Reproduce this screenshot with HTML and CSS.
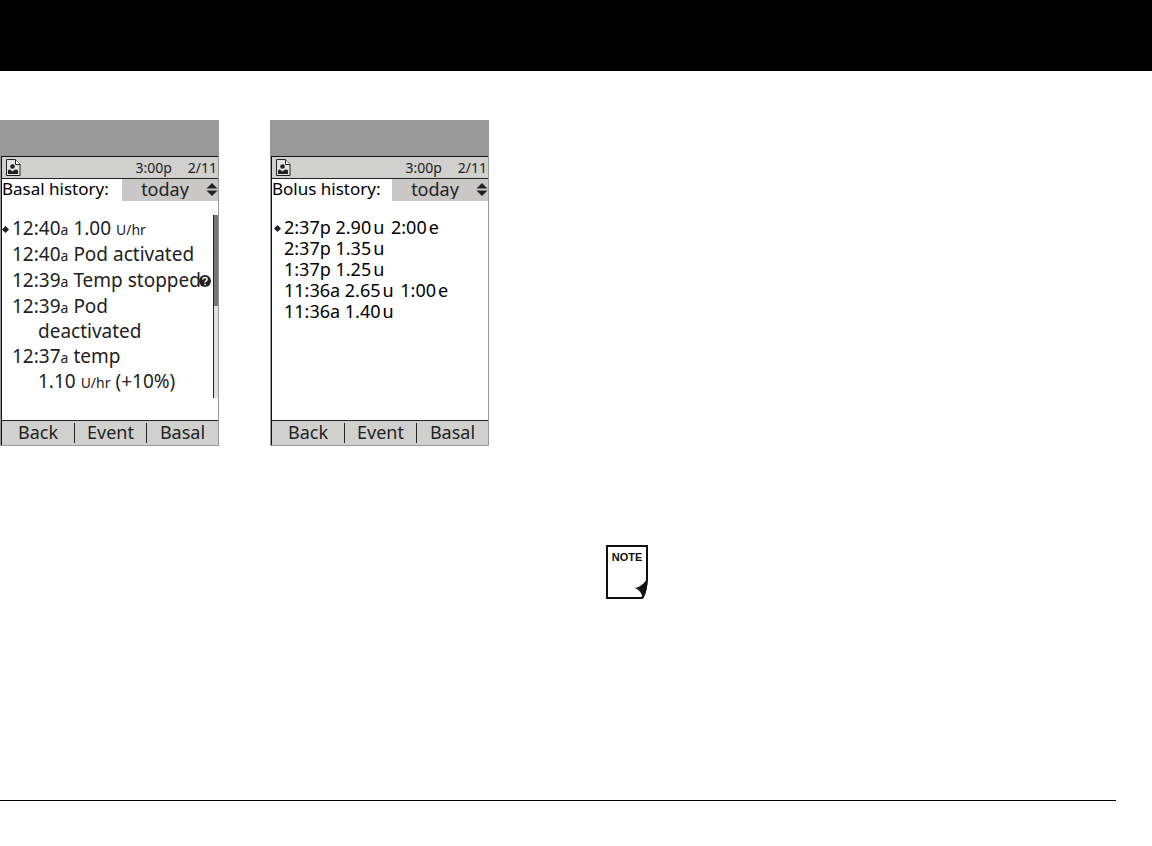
FILE: index.html
```
<!DOCTYPE html>
<html lang="en">
<head>
<meta charset="utf-8">
<meta name="viewport" content="width=device-width, initial-scale=1">
<title>Basal and bolus history</title>
<link rel="stylesheet" href="styles.css">
</head>
<body>
<svg class="defs" aria-hidden="true">
  <symbol id="doc" viewBox="0 0 15 17">
    <path d="M.5 .5H9.500L14 5.500V16.500H.5Z" fill="#e4e4e2" stroke="#222"/>
    <path d="M9.500 .5V5.500H14" fill="#fff" stroke="#222"/>
    <circle cx="6.500" cy="7.500" r="2.300" fill="#222"/>
    <path d="M2 15V11.500Q2 10.500 4 10.500L6.500 12.500L9 10.500Q12 10.500 12 11.500V15Z" fill="#222"/>
  </symbol>
  <symbol id="arrows" viewBox="0 0 12 13">
    <path d="M6 0L11.500 5.500H.5ZM.5 7.500H11.500L6 13Z" fill="#222"/>
  </symbol>
  <symbol id="diamond" viewBox="0 0 7 7">
    <path d="M3.500 0L7 3.500L3.500 7L0 3.500Z" fill="#222"/>
  </symbol>
</svg>

<header class="banner"></header>

<main class="page">
  <section class="device">
    <div class="bezel"></div>
    <div class="screen">
      <div class="status">
        <svg class="doc"><use href="#doc"/></svg>
        <span class="time">3:00p</span><span>2/11</span>
      </div>
      <div class="filter">
        <label for="basal-day">Basal history:</label>
        <div class="picker">
          <select id="basal-day"><option>today</option></select>
          <svg class="arrows"><use href="#arrows"/></svg>
        </div>
      </div>
      <div class="content">
        <ul class="log basal">
          <li><svg class="mark"><use href="#diamond"/></svg>12:40<small>a</small> 1.00 <small>U/hr</small></li>
          <li>12:40<small>a</small> Pod activated</li>
          <li>12:39<small>a</small> Temp stopped<svg class="help" viewBox="0 0 12 12"><circle cx="6" cy="6" r="6" fill="#222"/><path d="M3.800 4.500Q4 2.500 6 2.500T8.200 4.300Q8.200 5.300 7 6Q6 6.500 6 7.500M6 8.700V10.200" fill="none" stroke="#fff" stroke-width="1.500"/></svg></li>
          <li>12:39<small>a</small> Pod<div class="more">deactivated</div></li>
          <li>12:37<small>a</small> temp<div class="more">1.10 <small>U/hr</small> (+10%)</div></li>
        </ul>
        <div class="scroll"><div class="thumb"></div></div>
      </div>
      <div class="keys"><button>Back</button><button>Event</button><button>Basal</button></div>
    </div>
  </section>

  <section class="device">
    <div class="bezel"></div>
    <div class="screen">
      <div class="status">
        <svg class="doc"><use href="#doc"/></svg>
        <span class="time">3:00p</span><span>2/11</span>
      </div>
      <div class="filter">
        <label for="bolus-day">Bolus history:</label>
        <div class="picker">
          <select id="bolus-day"><option>today</option></select>
          <svg class="arrows"><use href="#arrows"/></svg>
        </div>
      </div>
      <div class="content">
        <ul class="log bolus">
          <li><svg class="mark"><use href="#diamond"/></svg>2:37p 2.90<i>u</i> 2:00<i>e</i></li>
          <li>2:37p 1.35<i>u</i></li>
          <li>1:37p 1.25<i>u</i></li>
          <li>11:36a 2.65<i>u</i> 1:00<i>e</i></li>
          <li>11:36a 1.40<i>u</i></li>
        </ul>
      </div>
      <div class="keys"><button>Back</button><button>Event</button><button>Basal</button></div>
    </div>
  </section>

  <aside class="aside">
    <div class="note">
      <svg class="sheet" viewBox="0 0 42 54"><path d="M1 1H41V34Q40 47 36 53H1Z" fill="#fff" stroke="#111" stroke-width="2"/><path d="M42 32Q41 48 37 54Q36 46 29 43Q38 41 42 32Z" fill="#111"/></svg>
      <span>NOTE</span>
    </div>
  </aside>
</main>

<footer class="rule"></footer>
</body>
</html>
```
FILE: styles.css
```
* { box-sizing: border-box; }
body {
  margin: 0;
  min-height: 100vh;
  display: flex;
  flex-direction: column;
  background: #fff;
  color: #222;
  font-family: "Noto Sans", "Open Sans", sans-serif;
  font-size: 18px;
}
svg { display: block; flex: none; }
.defs { position: absolute; width: 0; height: 0; }
.banner { height: 71px; background: #000; }
.page {
  flex: 1;
  display: flex;
  align-items: flex-start;
  gap: 51px;
  padding-top: 49px;
}
.device {
  width: 219px;
  flex: none;
  border: solid #999;
  border-width: 0 1px 1px;
}
.bezel { height: 36px; margin: 0 -1px; background: #999; }
.screen { border-left: 1px solid #111; border-top: 1px solid #111; }
.status {
  display: flex;
  align-items: center;
  gap: 16px;
  height: 22px;
  padding: 0 1px 0 4px;
  background: #d0d0ce;
  border-bottom: 1px solid #222;
  font-size: 14px;
}
.doc { width: 15px; height: 17px; }
.time { margin-left: auto; }
.filter {
  display: flex;
  justify-content: space-between;
  height: 22px;
  line-height: 20px;
  color: #000;
}
.filter label { font-size: 17px; }
.picker { position: relative; width: 96px; height: 22px; background: #c9c8c6; }
.picker select {
  appearance: none;
  display: block;
  width: 100%;
  height: 20px;
  padding: 0 10px 0 0;
  border: 0;
  background: none;
  color: #222;
  font: inherit;
  line-height: 20px;
  text-align: center;
  text-align-last: center;
}
.arrows { position: absolute; right: 0; top: 4px; width: 12px; height: 13px; pointer-events: none; }
.content { display: flex; justify-content: space-between; height: 219px; padding-top: 14px; }
.log { margin: 0; padding: 0; list-style: none; white-space: nowrap; }
.log li { position: relative; }
.log i { margin: 0 2px; font-style: normal; }
.basal { padding-left: 10px; font-size: 19px; line-height: 26px; }
.basal small { font-size: 14px; line-height: 1; }
.more { padding-left: 26px; line-height: 24px; }
.bolus { padding: 2px 0 0 12px; line-height: 21px; color: #000; }
.mark { position: absolute; left: -10px; top: 11px; width: 7px; height: 7px; }
.bolus .mark { top: 8px; }
.help { display: inline-block; width: 12px; height: 12px; margin-left: -2px; vertical-align: 0; }
.scroll { flex: none; width: 5px; height: 183px; background: #e0e0de; border-left: 1px solid #222; }
.thumb { width: 4px; height: 91px; background: #777; }
.keys {
  display: grid;
  grid-template-columns: 1fr 1fr 1fr;
  height: 25px;
  padding: 2px 0;
  background: #d0d0ce;
  border-top: 1px solid #222;
}
.keys button {
  padding: 0 0 2px;
  border: 0;
  background: none;
  color: #222;
  font: inherit;
  line-height: 18px;
}
.keys button + button { border-left: 1px solid #222; }
.aside { flex: 1; padding: 425px 0 0 66px; }
.note { position: relative; width: 42px; }
.sheet { width: 42px; height: 54px; }
.note span {
  position: absolute;
  inset: 5px 0 auto;
  text-align: center;
  font: bold 11px/14px "Liberation Sans", Arial, sans-serif;
  color: #111;
}
.rule { height: 46px; margin-right: 36px; border-top: 1px solid #000; }
```
